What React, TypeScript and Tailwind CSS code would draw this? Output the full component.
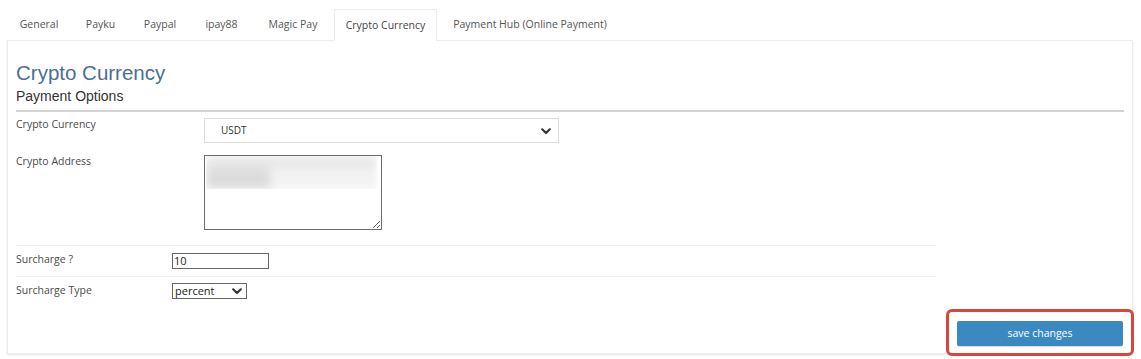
import React from 'react'

const tabs = [
  { label: 'General', width: 'w-[66px]' },
  { label: 'Payku', width: 'w-[57px]' },
  { label: 'Paypal', width: 'w-[62px]' },
  { label: 'ipay88', width: 'w-[61px]' },
  { label: 'Magic Pay', width: 'w-[82px]' },
  { label: 'Crypto Currency', width: 'w-[103px]', active: true },
  { label: 'Payment Hub (Online Payment)', width: 'w-[186px]' },
]

function Chevron({ className }: { className?: string }) {
  return (
    <svg viewBox="0 0 10 7" className={className} fill="none">
      <path d="M1.2 1.3 5 5.1l3.8-3.8" stroke="#333" strokeWidth="2.1" strokeLinecap="round" strokeLinejoin="round" />
    </svg>
  )
}

export default function App() {
  return (
    <div className="h-[359px] w-[1141px] overflow-hidden bg-white pl-[6px] pt-[9px] font-['Open_Sans',sans-serif] text-[#4a4a4a]">
      <ul className="flex h-[31px]">
        {tabs.map((tab) => (
          <li
            key={tab.label}
            className={
              tab.active
                ? `${tab.width} relative z-10 -mb-px flex items-center justify-center border border-b-0 border-[#ececec] bg-white text-[10.5px] text-[#444]`
                : `${tab.width} flex items-center justify-center text-[10.5px] text-[#555]`
            }
          >
            {tab.label}
          </li>
        ))}
      </ul>

      <div className="ml-px w-[1126px] border border-[#ececec] px-[8px] pb-[7px] pt-[21px] shadow-[0_1px_2px_rgba(0,0,0,0.1)]">
        <h2 className="font-['Liberation_Sans',Arial,sans-serif] text-[20.5px] leading-[22px] text-[#4a6f95]">
          Crypto Currency
        </h2>
        <h3 className="mt-[4px] font-['Liberation_Sans',Arial,sans-serif] text-[14px] leading-[16px] text-[#333]">
          Payment Options
        </h3>
        <div className="mt-[6px] h-[2px] bg-[#d4d4d4]" />

        <div className="mt-[6px] grid grid-cols-[188px_1fr] gap-y-[12px] text-[10.5px]">
          <label className="leading-[12px]">Crypto Currency</label>
          <div className="relative h-[25px] w-[355px] border border-[#dcdcdc] bg-white">
            <select
              defaultValue="USDT"
              className="h-full w-full appearance-none bg-transparent pl-[16px] text-[10px] text-[#333] outline-none"
            >
              <option>USDT</option>
            </select>
            <Chevron className="pointer-events-none absolute right-[7px] top-[9px] h-[7px] w-[10px]" />
          </div>

          <label className="leading-[12px]">Crypto Address</label>
          <div className="relative h-[75px] w-[178px]">
            <textarea
              readOnly
              className="block h-full w-full border border-[#6b6b6b] bg-white outline-none"
            />
            <div className="pointer-events-none absolute left-[2px] top-[1px] h-[33px] w-[171px] overflow-hidden">
              <div className="flex h-full flex-col blur-[4px]">
                <div className="h-[12px] bg-[#e8e8e8]" />
                <div className="flex flex-1">
                  <div className="w-[64px] bg-[#dcdcdc]" />
                  <div className="flex-1 bg-[#f2f2f2]" />
                </div>
              </div>
            </div>
          </div>
        </div>

        <div className="mt-[15px] w-[920px] text-[10.5px]">
          <div className="flex h-[31px] items-start border-t border-[#ececec] pt-[7px]">
            <label className="w-[156px] leading-[12px]">Surcharge ?</label>
            <input
              readOnly
              value="10"
              className="h-[16px] w-[97px] border border-[#666] pl-[1px] text-[11px] text-[#222] outline-none"
            />
          </div>
          <div className="flex items-start border-t border-[#ececec] pt-[6px]">
            <label className="w-[156px] pt-[1px] leading-[12px]">Surcharge Type</label>
            <div className="relative h-[16px] w-[75px] border border-[#666]">
              <select
                defaultValue="percent"
                className="h-full w-full appearance-none bg-transparent pl-[2px] text-[11px] leading-[14px] text-[#222] outline-none"
              >
                <option>percent</option>
                <option>fixed</option>
              </select>
              <Chevron className="pointer-events-none absolute right-[4px] top-[4px] h-[7px] w-[10px]" />
            </div>
          </div>
        </div>

        <div className="mt-[20px] flex justify-end pr-px">
          <div className="relative">
            <div className="pointer-events-none absolute -inset-x-[11px] -inset-y-[10px] rounded-[6px] border-[3px] border-[#d9443b]" />
            <button className="h-[25px] w-[166px] rounded-[2px] bg-[#3b89c1] text-[10.5px] font-medium text-white shadow-[0_1px_1px_rgba(0,0,0,0.15)]">
              save changes
            </button>
          </div>
        </div>
      </div>
    </div>
  )
}
